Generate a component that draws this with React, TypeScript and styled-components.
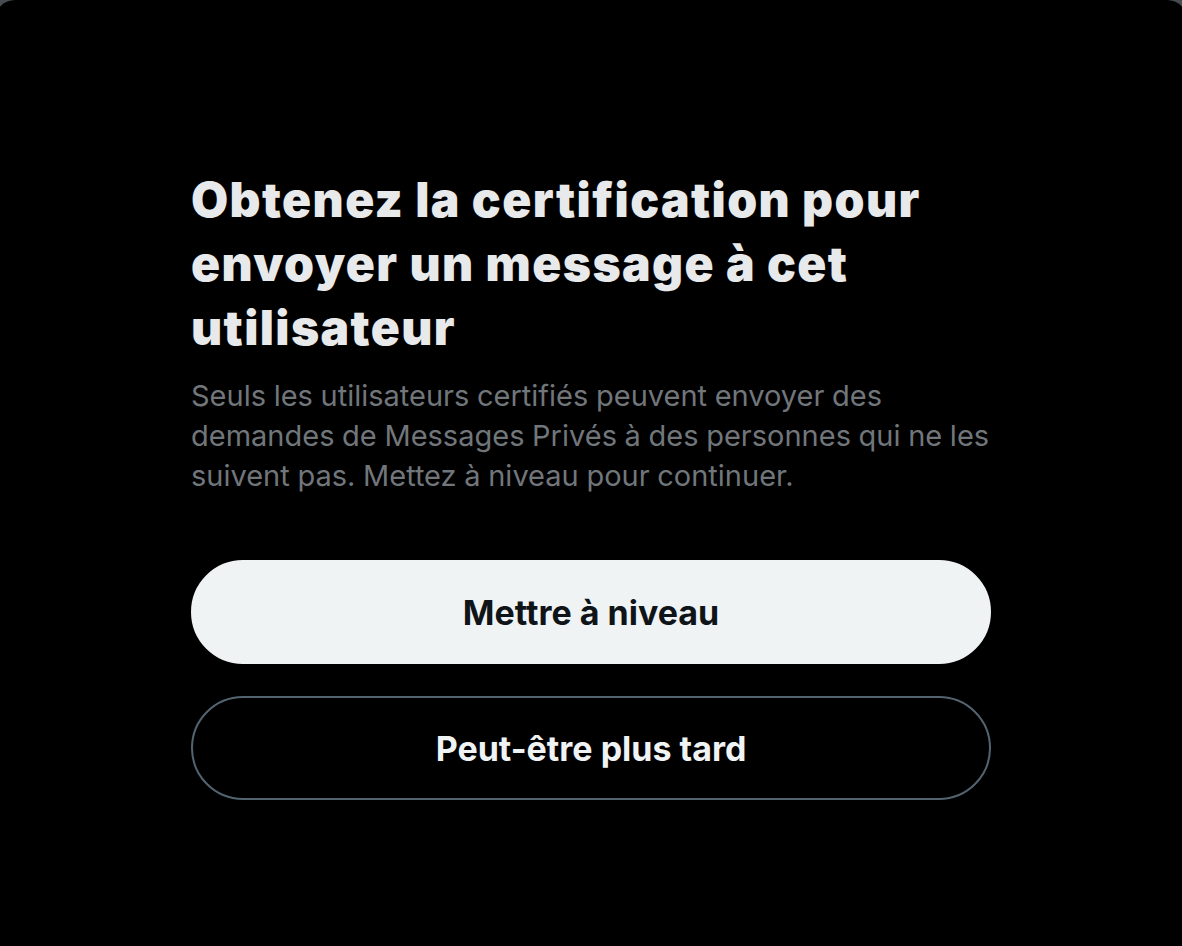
import React from "react";
import styled, { createGlobalStyle } from "styled-components";

const GlobalStyle = createGlobalStyle`
  html, body {
    margin: 0;
    padding: 0;
    background: #474c52;
  }
  body {
    font-family: Inter, "Noto Sans", "Liberation Sans", sans-serif;
    -webkit-font-smoothing: antialiased;
  }
`;

const Modal = styled.div`
  margin: 0 -5px;
  height: 946px;
  background: #000;
  border-radius: 20px 20px 0 0;
  display: flex;
  justify-content: center;
`;

const Content = styled.div`
  width: 800px;
  padding-top: 168px;
  display: flex;
  flex-direction: column;
`;

const Title = styled.h1`
  margin: 0;
  font-size: 48px;
  line-height: 64px;
  font-weight: 900;
  color: #e7e9ea;
  letter-spacing: 1.4px;
`;

const Description = styled.p`
  margin: 16px -24px 0 0;
  font-size: 29px;
  line-height: 40px;
  font-weight: 400;
  color: #71767b;
  word-spacing: -0.5px;
`;

const Actions = styled.div`
  margin-top: 64px;
  display: flex;
  flex-direction: column;
  gap: 32px;
`;

const Button = styled.button<{ $variant: "primary" | "outline" }>`
  height: 104px;
  border-radius: 52px;
  font-family: inherit;
  font-size: 34px;
  font-weight: 700;
  cursor: pointer;
  border: 2px solid ${(p) => (p.$variant === "primary" ? "#eff3f4" : "#536471")};
  background: ${(p) => (p.$variant === "primary" ? "#eff3f4" : "#000")};
  color: ${(p) => (p.$variant === "primary" ? "#0f1419" : "#eff3f4")};
`;

export default function App() {
  return (
    <>
      <GlobalStyle />
      <Modal>
        <Content>
          <Title>
            Obtenez la certification pour envoyer un message à cet utilisateur
          </Title>
          <Description>
            Seuls les utilisateurs certifiés peuvent envoyer des demandes de
            Messages Privés à des personnes qui ne les suivent pas. Mettez à
            niveau pour continuer.
          </Description>
          <Actions>
            <Button $variant="primary">Mettre à niveau</Button>
            <Button $variant="outline">Peut-être plus tard</Button>
          </Actions>
        </Content>
      </Modal>
    </>
  );
}
